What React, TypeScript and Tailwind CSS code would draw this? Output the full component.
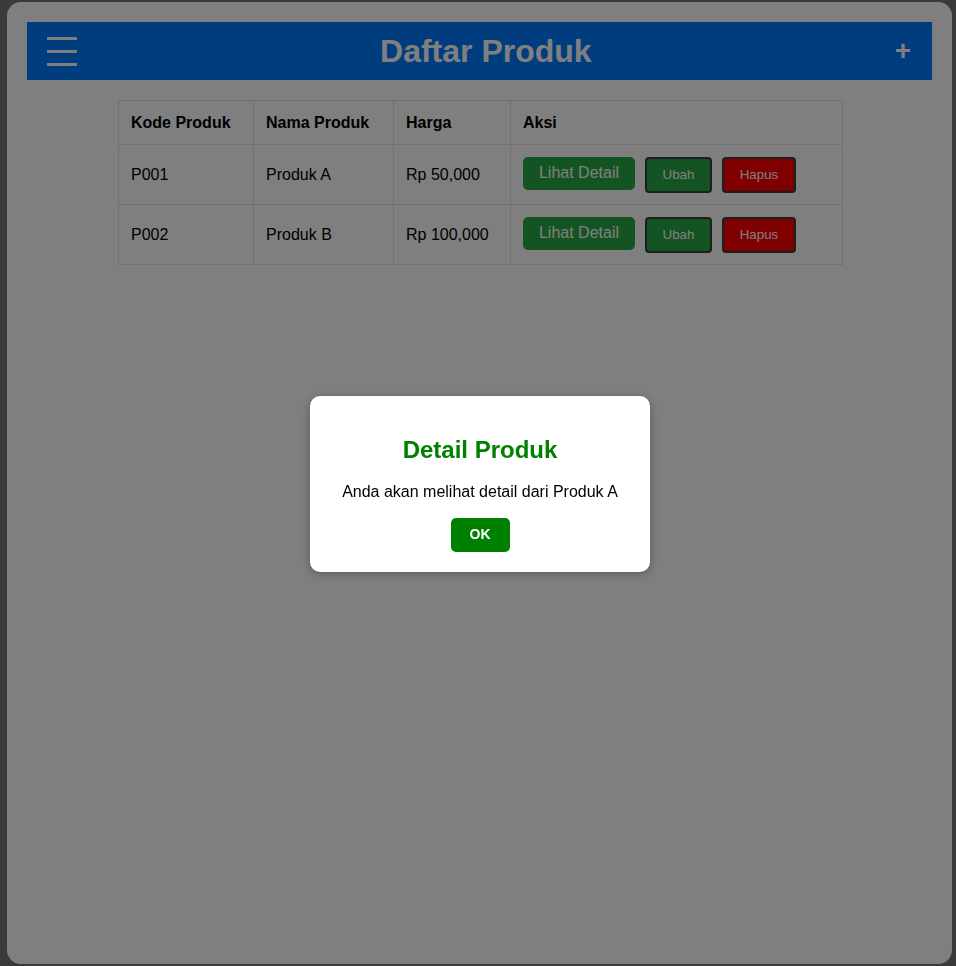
import React from "react";

const products = [
  { kode: "P001", nama: "Produk A", harga: "Rp 50,000" },
  { kode: "P002", nama: "Produk B", harga: "Rp 100,000" },
];

const App = () => {
  return (
    <div
      className="min-h-screen w-full bg-[#747474] pt-[2px] pl-[7px]"
      style={{ fontFamily: '"Liberation Sans", Arial, sans-serif' }}
    >
      <div className="w-[945px] h-[962px] bg-white rounded-[14px] p-5">
        {/* header */}
        <div className="h-[58px] bg-[#007bff] flex items-center justify-between px-5 text-white">
          <div className="flex flex-col gap-[10px] w-[30px]">
            <span className="block h-[3px] w-[30px] bg-white" />
            <span className="block h-[3px] w-[30px] bg-white" />
            <span className="block h-[3px] w-[30px] bg-white" />
          </div>
          <h1 className="text-[32px] font-bold leading-[37px]">Daftar Produk</h1>
          <span className="text-[28px] font-bold leading-[32px] pr-px">+</span>
        </div>

        {/* table */}
        <table className="w-[724px] ml-[91px] mt-5 border-collapse table-fixed text-[16px] text-black">
          <colgroup>
            <col className="w-[135px]" />
            <col className="w-[140px]" />
            <col className="w-[117px]" />
            <col className="w-[332px]" />
          </colgroup>
          <thead>
            <tr className="h-[44px]">
              {["Kode Produk", "Nama Produk", "Harga", "Aksi"].map((h) => (
                <th
                  key={h}
                  className="border border-[#e2e2e2] px-3 text-left font-bold"
                >
                  {h}
                </th>
              ))}
            </tr>
          </thead>
          <tbody>
            {products.map((p) => (
              <tr key={p.kode} className="h-[60px]">
                <td className="border border-[#e2e2e2] px-3">{p.kode}</td>
                <td className="border border-[#e2e2e2] px-3">{p.nama}</td>
                <td className="border border-[#e2e2e2] px-3">{p.harga}</td>
                <td className="border border-[#e2e2e2] px-3">
                  <div className="flex items-center gap-[10px]">
                    <button className="w-[112px] h-[33px] mb-[3px] bg-[#28a745] text-white text-[16px] rounded-[5px]">
                      Lihat Detail
                    </button>
                    <button className="w-[67px] h-[36px] bg-[#28a745] text-white text-[13.33px] rounded-[4px] border-2 border-[#3c3c3c]">
                      Ubah
                    </button>
                    <button className="w-[74px] h-[36px] bg-[#ff0000] text-white text-[13.33px] rounded-[4px] border-2 border-[#3c3c3c]">
                      Hapus
                    </button>
                  </div>
                </td>
              </tr>
            ))}
          </tbody>
        </table>
      </div>

      {/* backdrop */}
      <div className="fixed inset-0 bg-[rgba(0,0,0,0.5)]" />

      {/* dialog */}
      <div className="fixed inset-0 flex items-center justify-center pl-[4px] pt-[1px]">
        <div className="w-[340px] h-[176px] bg-white rounded-[10px] shadow-[0_2px_10px_rgba(0,0,0,0.3)] flex flex-col items-center pt-[40px] pb-[20px]">
          <h2 className="text-[24px] leading-[28px] font-bold text-[#008000]">
            Detail Produk
          </h2>
          <p className="mt-[19px] text-[16px] leading-[18px] text-black">
            Anda akan melihat detail dari Produk A
          </p>
          <button className="mt-[17px] w-[59px] h-[35px] bg-[#008000] text-white text-[14px] font-bold rounded-[5px]">
            OK
          </button>
        </div>
      </div>
    </div>
  );
};

export default App;
